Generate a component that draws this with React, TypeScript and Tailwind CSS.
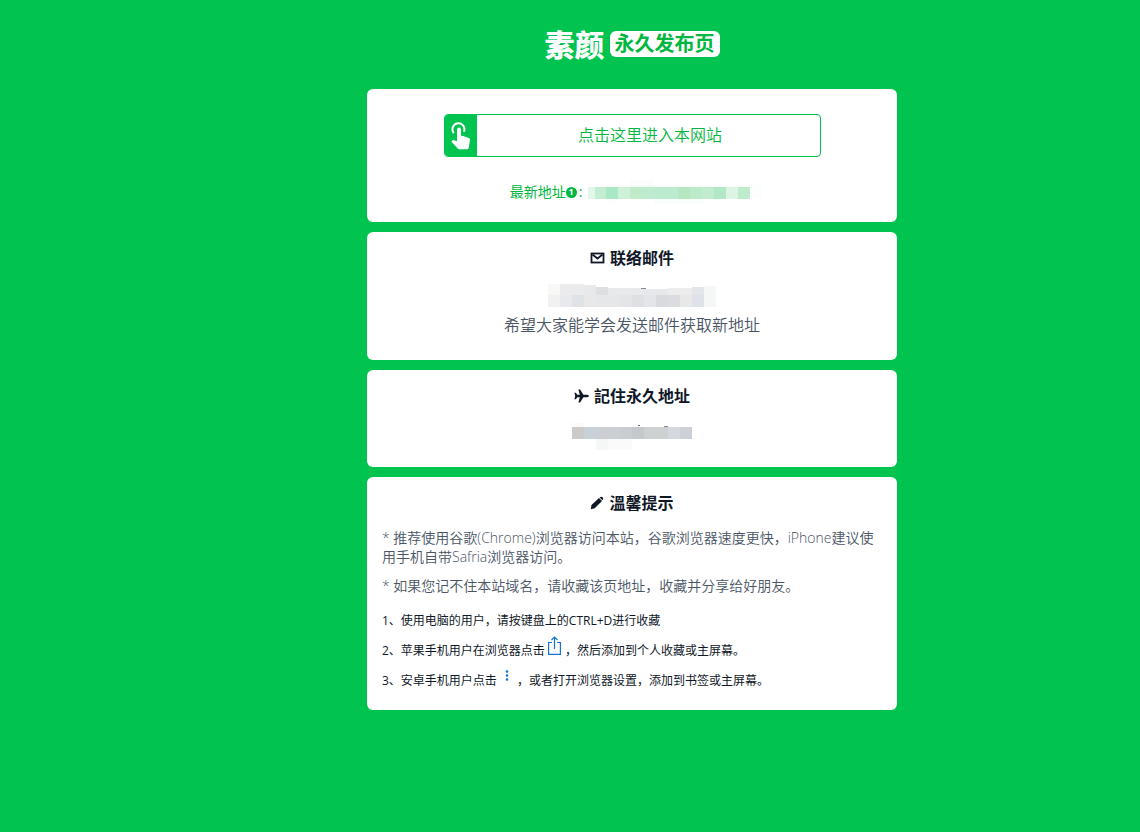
import type { ReactNode } from "react";

type Cell = [x: number, y: number, w: number, h: number, fill: string];

const latestCells: Cell[] = [
    [2, 7, 7, 12, "#e2f6e9"], [9, 7, 11, 12, "#c5edd1"], [20, 7, 12, 12, "#a9e8c4"], [32, 7, 12, 12, "#cdf0d9"],
    [44, 7, 12, 12, "#c0eac8"], [56, 7, 36, 12, "#bdebd0"], [92, 7, 12, 12, "#b5e7c0"], [104, 7, 12, 12, "#bcebc9"],
    [116, 7, 12, 12, "#c1ecd0"], [128, 7, 12, 12, "#b3e8c7"], [140, 7, 12, 12, "#dcf4e3"], [152, 7, 12, 12, "#bfebcd"],
    [164, 3, 12, 15, "#fcfefd"], [44, 0, 24, 7, "#fafdfb"], [20, 19, 12, 5, "#fbfefc"], [68, 19, 50, 5, "#fafefb"],
];

const mailCells: Cell[] = [
    [0, 2, 12, 11, "#f8f8f7"], [12, 2, 24, 11, "#ebebed"], [36, 3, 12, 10, "#e8e9eb"], [48, 5, 12, 8, "#dedfe2"],
    [60, 6, 36, 7, "#e8e9ea"], [96, 7, 24, 6, "#e6e8eb"], [120, 6, 24, 7, "#ececed"], [144, 5, 12, 8, "#e2e5ea"],
    [156, 4, 12, 21, "#f5f7f7"], [0, 13, 12, 12, "#f1f1f1"], [12, 13, 12, 12, "#e8e9ec"], [24, 13, 12, 12, "#dfe3e5"],
    [36, 13, 12, 12, "#e8e8e8"], [48, 13, 24, 12, "#e5e7e9"], [72, 13, 12, 12, "#e4e5e7"], [84, 13, 12, 12, "#dfe0e3"],
    [96, 13, 12, 12, "#e4e5e8"], [108, 13, 12, 12, "#d8dade"], [120, 13, 12, 12, "#dadcdf"], [132, 13, 12, 12, "#e8e8e8"],
    [144, 13, 12, 12, "#dfe3e9"], [93, 6, 5, 1, "#85898f"], [96, 25, 48, 4, "#fcfdfd"],
];

const siteCells: Cell[] = [
    [0, 0, 12, 4, "#fafafa"], [0, 4, 12, 12, "#cbcac9"], [12, 4, 12, 12, "#c8d0da"], [24, 4, 24, 12, "#cbced2"],
    [48, 4, 12, 12, "#c9ccd0"], [60, 4, 12, 12, "#c5c9cb"], [72, 4, 24, 12, "#cdd1d2"], [96, 4, 12, 12, "#d5d8de"],
    [108, 4, 12, 12, "#cdd1d7"], [24, 16, 12, 11, "#f5f6f6"], [36, 16, 24, 11, "#fafafa"],
    [66, 2, 2, 1, "#6b7280"], [92, 3, 4, 1, "#858b93"],
];

function Mosaic({ cells, className, width, height }: { cells: Cell[]; className?: string; width: number; height: number }) {
    return (
        <svg className={className} width={width} height={height} shapeRendering="crispEdges" aria-hidden="true">
            {cells.map(([x, y, w, h, fill]) => <rect key={`${x}-${y}`} x={x} y={y} width={w} height={h} fill={fill} />)}
        </svg>
    );
}

function TapIcon() {
    return (
        <svg width="20" height="28" viewBox="0 0 20 28" aria-hidden="true">
            <path d="M2.4 10.5A6 6 0 1 1 13.2 9" fill="none" stroke="currentColor" strokeWidth="2" strokeLinecap="round" />
            <path d="M6 7.6a2 2 0 0 1 4 0v6.2l2.2.3 1.2.5 2 .3 1 .7 1.5.3q1.2.5 1.1 1.8l-1.3 8.3q-.3 1.3-1.6 1.3H8.6q-1 0-1.8-.8L.7 19.9q-.5-.9.4-1.5 1.3-.7 2.7 0L6 19.3z" fill="currentColor" />
        </svg>
    );
}

function MailIcon() {
    return (
        <svg width="15" height="12" viewBox="0 0 15 12" fill="none" stroke="currentColor" aria-hidden="true">
            <rect x="1.5" y="1.5" width="12" height="9" strokeWidth="1.8" />
            <path d="M2.5 2.5l5 4 5-4" strokeWidth="1.8" />
        </svg>
    );
}

function PlaneIcon() {
    return (
        <svg width="15" height="14" viewBox="0 0 15 14" fill="currentColor" aria-hidden="true">
            <path d="M15 7q-.4 1.3-2.4 1.3H9.4L6.1 13.6H4.4L5.8 8.3H3.3L1.8 10.2H.4L1.2 7 .4 3.800h1.4l1.5 1.900h2.500L4.400.4h1.700l3.300 5.300h3.200Q14.600 5.700 15 7z" />
        </svg>
    );
}

function PencilIcon() {
    return (
        <svg width="14" height="14" viewBox="0 0 14 14" fill="currentColor" aria-hidden="true">
            <path d="M.8 13.2L1.500 9 9 2l3 3-7.300 7.200z" />
            <path d="M9.6 1.500q1.400-1.200 2.500-.6l1 .9q.5 1.200-.6 2.500z" />
        </svg>
    );
}

function ShareIcon() {
    return (
        <svg className="mr-1 ml-[3px] inline-block align-baseline" width="13" height="19" viewBox="0 0 13 19" fill="none" stroke="#1473dc" strokeWidth="1.2" aria-hidden="true">
            <path d="M4 6.5H.6v11.9h11.8V6.5H9M6.5 13V1M3.5 4l3-3 3 3" />
        </svg>
    );
}

function MoreIcon() {
    return (
        <svg className="mx-2 inline-block align-baseline" width="4" height="15" viewBox="0 0 4 15" fill="#1473dc" aria-hidden="true">
            <circle cx="2" cy="1.5" r="1.3" />
            <circle cx="2" cy="5.5" r="1.3" />
            <circle cx="2" cy="9.5" r="1.3" />
        </svg>
    );
}

function Card({ className, children }: { className: string; children: ReactNode }) {
    return <section className={`rounded-md bg-white px-[15px] ${className}`}>{children}</section>;
}

function CardTitle({ icon, children }: { icon: ReactNode; children: ReactNode }) {
    return (
        <h2 className="flex items-center justify-center gap-[5px] text-base leading-5 font-semibold text-gray-900">
            {icon}
            {children}
        </h2>
    );
}

export default function App() {
    return (
        <div lang="zh-CN" className="min-h-screen bg-[#00c44f] pl-[124px] font-['Open_Sans','Noto_Sans_CJK_SC',sans-serif]">
            <main className="mx-auto max-w-[530px] pt-[30px] pb-8">
                <h1 className="flex h-8 items-start justify-center gap-[5px] font-bold text-white">
                    <span className="text-[30px] leading-[30px] font-extrabold">素颜</span>
                    <span className="mt-px rounded-md bg-white px-[5px] text-xl leading-[26px] text-[#00b840]">永久发布页</span>
                </h1>

                <div className="mt-[27px] flex flex-col gap-[10px]">
                    <Card className="pt-[25px] pb-[18px] text-center text-[#00b840]">
                        <a href="#enter" className="mx-auto flex h-[43px] max-w-[377px] overflow-hidden rounded border border-[#00c44f]">
                            <span className="flex w-8 items-center justify-center bg-[#00c44f] pt-px text-white">
                                <TapIcon />
                            </span>
                            <span className="flex-1 pl-1 text-base leading-10 font-[350]">点击这里进入本网站</span>
                        </a>
                        <p className="mt-[23px] flex h-6 items-center justify-center pl-2 text-sm">
                            最新地址
                            <span className="flex size-[11px] items-center justify-center rounded-full bg-[#00b840] text-[9px] font-bold text-white">1</span>
                            <span className="px-[2px]">:</span>
                            <Mosaic cells={latestCells} width={176} height={24} className="ml-[2px] shrink-0" />
                        </p>
                    </Card>

                    <Card className="pt-4 pb-6 text-center">
                        <CardTitle icon={<MailIcon />}>联络邮件</CardTitle>
                        <Mosaic cells={mailCells} width={168} height={30} className="mx-auto mt-[14px]" />
                        <p className="mt-[3px] text-base leading-[21px] font-[350] text-gray-600">希望大家能学会发送邮件获取新地址</p>
                    </Card>

                    <Card className="pt-4 pb-[17px]">
                        <CardTitle icon={<PlaneIcon />}>記住永久地址</CardTitle>
                        <Mosaic cells={siteCells} width={120} height={27} className="mx-auto mt-[17px]" />
                    </Card>

                    <Card className="pt-4 pb-[14px]">
                        <CardTitle icon={<PencilIcon />}>溫馨提示</CardTitle>
                        <div className="mt-[15px] space-y-[10px] text-sm leading-[19px] font-[350] text-gray-600">
                            <p>* 推荐使用谷歌(Chrome)浏览器访问本站，谷歌浏览器速度更快，iPhone建议使用手机自带Safria浏览器访问。</p>
                            <p>* 如果您记不住本站域名，请收藏该页地址，收藏并分享给好朋友。</p>
                        </div>
                        <div className="mt-[11px] text-xs leading-[30px] text-gray-900">
                            <p>1、使用电脑的用户，请按键盘上的CTRL+D进行收藏</p>
                            <p>2、苹果手机用户在浏览器点击<ShareIcon />，然后添加到个人收藏或主屏幕。</p>
                            <p>3、安卓手机用户点击<MoreIcon />，或者打开浏览器设置，添加到书签或主屏幕。</p>
                        </div>
                    </Card>
                </div>
            </main>
        </div>
    );
}
